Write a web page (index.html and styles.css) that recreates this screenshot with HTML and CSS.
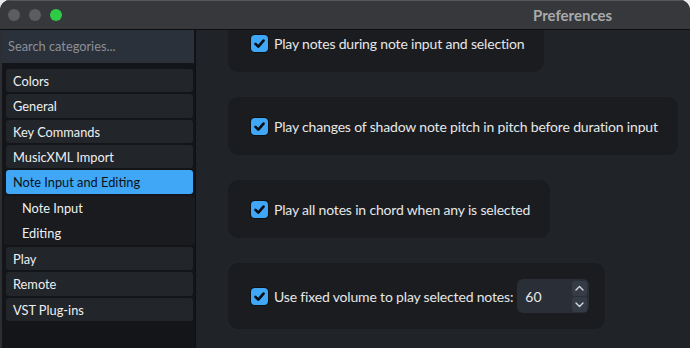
FILE: index.html
```html
<!DOCTYPE html>
<html lang="en">
  <head>
    <meta charset="UTF-8" />
    <title>Preferences</title>
    <link rel="stylesheet" href="styles.css">
  </head>
  <body>
    <div class="window">
      <header class="titlebar">
        <span class="light"></span>
        <span class="light"></span>
        <span class="light green"></span>
        <h1>Preferences</h1>
      </header>

      <div class="main">
        <aside class="sidebar">
          <div class="search">Search categories...</div>
          <ul class="cats">
            <li>Colors</li>
            <li>General</li>
            <li>Key Commands</li>
            <li>MusicXML Import</li>
            <li class="active">Note Input and Editing</li>
            <li class="group">
              <span>Note Input</span>
              <span>Editing</span>
            </li>
            <li>Play</li>
            <li>Remote</li>
            <li>VST Plug-ins</li>
          </ul>
        </aside>

        <section class="content">
          <div class="panel first">
            <span class="check"><svg viewBox="0 0 17 17"><path d="M4.5 8.8l2.8 2.8 5.2-6" /></svg></span>
            <span>Play notes during note input and selection</span>
          </div>
          <div class="panel">
            <span class="check"><svg viewBox="0 0 17 17"><path d="M4.5 8.8l2.8 2.8 5.2-6" /></svg></span>
            <span>Play changes of shadow note pitch in pitch before duration input</span>
          </div>
          <div class="panel">
            <span class="check"><svg viewBox="0 0 17 17"><path d="M4.5 8.8l2.8 2.8 5.2-6" /></svg></span>
            <span>Play all notes in chord when any is selected</span>
          </div>
          <div class="panel tall">
            <span class="check"><svg viewBox="0 0 17 17"><path d="M4.5 8.8l2.8 2.8 5.2-6" /></svg></span>
            <span>Use fixed volume to play selected notes:</span>
            <div class="spin">
              <span class="val">60</span>
              <div class="arrows">
                <span><svg viewBox="0 0 15 15"><path d="M4 9l3.5-3.5 3.5 3.5" /></svg></span>
                <span><svg viewBox="0 0 15 15"><path d="M4 6l3.5 3.5 3.5-3.5" /></svg></span>
              </div>
            </div>
          </div>
        </section>
      </div>
    </div>
  </body>
</html>
```

FILE: styles.css
```css
body {
  margin: 0;
  background: #e9e9e9;
  font-family: Lato, "Noto Sans", sans-serif;
  color: #e6e7e8;
}

.window {
  width: 690px;
  height: 348px;
  border-radius: 10px 10px 0 0;
  overflow: hidden;
  background: #202327;
  display: flex;
  flex-direction: column;
}

.titlebar {
  height: 30px;
  flex-shrink: 0;
  background: #36383b;
  border-top: 1px solid #55575a;
  border-bottom: 1px solid #0d0e0f;
  box-sizing: border-box;
  display: flex;
  align-items: center;
  padding-left: 8px;
  gap: 9px;
}

.light {
  width: 12px;
  height: 12px;
  border-radius: 50%;
  background: #5b5d60;
}

.green {
  background: #2fcb45;
}

h1 {
  margin: 0 0 0 462px;
  font-size: 15px;
  font-weight: bold;
  color: #a9aaab;
}

.main {
  flex: 1;
  display: flex;
  min-height: 0;
}

.sidebar {
  width: 196px;
  flex-shrink: 0;
  background: #141518;
  border-left: 2px solid #2c2e31;
  border-right: 1px solid #0f1012;
  box-sizing: border-box;
  font-size: 12.8px;
}

.search {
  height: 33px;
  background: #2a313b;
  color: #8b9098;
  line-height: 33px;
  padding-left: 6px;
  margin-right: 1px;
}

.cats {
  list-style: none;
  margin: 6px 2px 0 4px;
  padding: 0;
  display: flex;
  flex-direction: column;
  gap: 2px;
}

.cats li {
  height: 23.3px;
  line-height: 24px;
  background: #222529;
  border-radius: 3px;
  padding-left: 7px;
  color: #eef0f2;
}

.cats li.active {
  background: #3fa7f5;
  color: #0d1117;
  height: 24px;
}

.cats li.group {
  height: auto;
  margin: 0 -2px 0 -2px;
  padding: 0 0 0 18px;
  background: #191b1e;
  display: flex;
  flex-direction: column;
}

.group span {
  height: 24.5px;
  line-height: 25px;
}

.content {
  flex: 1;
  overflow: hidden;
  padding-left: 32px;
  display: flex;
  flex-direction: column;
  align-items: flex-start;
  gap: 25px;
}

.panel {
  height: 58px;
  flex-shrink: 0;
  background: #1a1c1f;
  border-radius: 11px;
  padding: 0 20px 0 23px;
  display: flex;
  align-items: center;
  gap: 6px;
  font-size: 14px;
  letter-spacing: -0.17px;
  white-space: nowrap;
}

.panel.first {
  margin-top: -16px;
}

.panel.tall {
  height: 66px;
  padding-right: 16px;
}

.check {
  width: 17px;
  height: 17px;
  border-radius: 4px;
  background: #3fa7f5;
  box-shadow: 0 0 0 1px #0e1013;
  display: flex;
}

.check svg {
  width: 17px;
  height: 17px;
  fill: none;
  stroke: #0a0c0f;
  stroke-width: 2.6;
  stroke-linecap: round;
  stroke-linejoin: round;
}

.spin {
  width: 72px;
  height: 34px;
  margin-left: -2px;
  background: #2a2f37;
  border-radius: 6px;
  display: flex;
  align-items: center;
  justify-content: space-between;
  padding: 0 2px 0 8px;
  box-sizing: border-box;
  letter-spacing: 0;
}

.arrows {
  display: flex;
  flex-direction: column;
  gap: 1px;
}

.arrows span {
  width: 15px;
  height: 15px;
  background: #363c45;
  border-radius: 3px;
  display: flex;
}

.arrows svg {
  width: 15px;
  height: 15px;
  fill: none;
  stroke: #d6d8db;
  stroke-width: 1.4;
  stroke-linecap: round;
  stroke-linejoin: round;
}
```
